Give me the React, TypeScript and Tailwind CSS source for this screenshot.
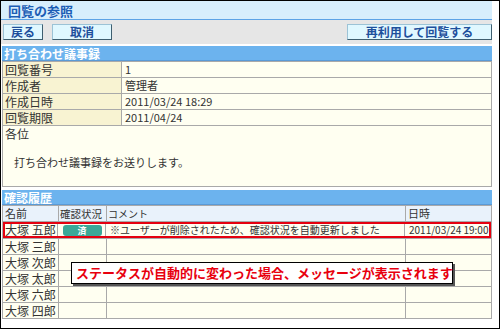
import React from 'react';

const infoRows = [
  { label: '回覧番号', value: '1' },
  { label: '作成者', value: '管理者' },
  { label: '作成日時', value: '2011/03/24 18:29' },
  { label: '回覧期限', value: '2011/04/24' },
];

const others = ['大塚 三郎', '大塚 次郎', '大塚 太郎', '大塚 六郎', '大塚 四郎'];

const Btn: React.FC<{ label: string; className?: string }> = ({ label, className = '' }) => (
  <button
    className={`h-[16px] bg-[#e0f8ff] border border-[#9cc3d6] border-r-[#3f5f70] border-b-[#3f5f70] text-[12px] leading-[14px] font-bold text-[#1d4f9c] ${className}`}
  >
    {label}
  </button>
);

const SectionHead: React.FC<{ title: string }> = ({ title }) => (
  <div className="h-[15px] bg-[#6cb3ee] border-b border-[#5a9ad6] pl-[2px] text-[12px] leading-[15px] font-bold text-white">
    {title}
  </div>
);

export default function App() {
  return (
    <div className="relative w-[500px] h-[329px] border border-black bg-white overflow-hidden font-['MS_PGothic','Noto_Sans_CJK_JP',sans-serif] text-[12px] text-[#333]">
      <div className="w-[491px] flex flex-col">
        <div className="h-[19px] bg-[#d7eefc] border-b border-[#5ca3e6] pl-[7px] text-[13px] leading-[19px] font-bold text-[#1c5db5]">
          回覧の参照
        </div>
        <div className="h-[24px] bg-[#e6e6e6] flex items-center pl-[2px]">
          <Btn label="戻る" className="w-[40px]" />
          <Btn label="取消" className="w-[60px] ml-[9px]" />
          <Btn label="再利用して回覧する" className="w-[145px] ml-auto" />
        </div>

        <div className="mt-[2px] pl-[1px]">
          <SectionHead title="打ち合わせ議事録" />
          <div className="grid grid-cols-[118px_1fr] gap-px bg-[#a9a9a9] border border-[#a9a9a9]">
            {infoRows.map((r) => (
              <React.Fragment key={r.label}>
                <div className="h-[15px] bg-[#f8f3d2] pl-[2px] leading-[15px]">{r.label}</div>
                <div className="h-[15px] bg-[#fffff1] pl-[3px] leading-[15px] text-[11px]">{r.value}</div>
              </React.Fragment>
            ))}
            <div className="col-span-2 h-[60px] bg-[#fffff1] pl-[2px] pt-[1px] leading-[14px]">
              <div>各位</div>
              <div className="mt-[14px] pl-[9px] text-[11px]">打ち合わせ議事録をお送りします。</div>
            </div>
          </div>
        </div>

        <div className="mt-[3px] pl-[1px]">
          <SectionHead title="確認履歴" />
          <div className="grid grid-cols-[55px_47px_298px_1fr] gap-px bg-[#a9a9a9] border border-[#a9a9a9]">
            <div className="h-[15px] bg-[#e9f2fb] pl-[2px] leading-[15px] text-[11px]">名前</div>
            <div className="h-[15px] bg-[#e9f2fb] pl-[1px] leading-[15px] text-[10.5px] whitespace-nowrap overflow-hidden">確認状況</div>
            <div className="h-[15px] bg-[#e9f2fb] pl-[1px] leading-[15px] text-[10px]">コメント</div>
            <div className="h-[15px] bg-[#e9f2fb] pl-[2px] leading-[15px] text-[11px]">日時</div>

            <div className="col-span-4 h-[16px] bg-[#fffff1] grid grid-cols-[55px_47px_298px_1fr] gap-px outline-2 outline-[#e5000f] -outline-offset-2">
              <div className="pl-[2px] leading-[16px] border-r border-[#a9a9a9] whitespace-nowrap">大塚 五郎</div>
              <div className="flex items-center justify-center border-r border-[#a9a9a9]">
                <span className="w-[39px] h-[11px] rounded-[3px] bg-[#3aa898] text-white text-[9px] leading-[11px] text-center font-bold">
                  済
                </span>
              </div>
              <div className="pl-[3px] leading-[16px] border-r border-[#a9a9a9] text-[10px] whitespace-nowrap overflow-hidden">
                ※ユーザーが削除されたため、確認状況を自動更新しました
              </div>
              <div className="pl-[3px] leading-[16px] text-[10px] whitespace-nowrap overflow-hidden">2011/03/24 19:00</div>
            </div>

            {others.map((n) => (
              <React.Fragment key={n}>
                <div className="h-[15px] bg-[#fffff1] pl-[2px] leading-[15px] whitespace-nowrap">{n}</div>
                <div className="h-[15px] bg-[#fffff1]" />
                <div className="h-[15px] bg-[#fffff1]" />
                <div className="h-[15px] bg-[#fffff1]" />
              </React.Fragment>
            ))}
          </div>
        </div>
      </div>

      <div className="absolute left-[70px] top-[261px] w-[382px] h-[22px] bg-white border border-black shadow-[2px_2px_0_#555] pl-[4px] text-[13px] leading-[20px] font-bold text-[#e8000e] whitespace-nowrap">
        ステータスが自動的に変わった場合、メッセージが表示されます
      </div>
    </div>
  );
}
